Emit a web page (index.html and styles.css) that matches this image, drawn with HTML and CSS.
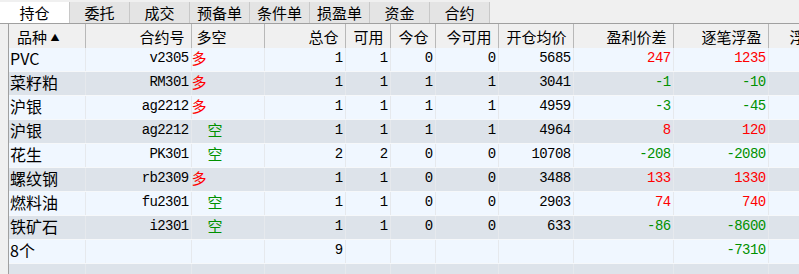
FILE: index.html
```html
<!DOCTYPE html>
<html lang="zh-CN">
<head>
    <meta charset="UTF-8">
    <title>持仓</title>
    <link rel="stylesheet" href="styles.css">
</head>
<body>
    <div class="tabs">
        <div class="tab active">持仓</div>
        <div class="tab">委托</div>
        <div class="tab">成交</div>
        <div class="tab">预备单</div>
        <div class="tab">条件单</div>
        <div class="tab">损盈单</div>
        <div class="tab">资金</div>
        <div class="tab">合约</div>
    </div>

    <div class="grid-wrap">
        <table class="grid">
            <colgroup>
                <col style="width:76px">
                <col style="width:106px">
                <col style="width:73px">
                <col style="width:81px">
                <col style="width:45px">
                <col style="width:45px">
                <col style="width:63px">
                <col style="width:75px">
                <col style="width:100px">
                <col style="width:95px">
                <col style="width:88px">
            </colgroup>
            <thead>
                <tr>
                    <th class="l first">品种 <span class="sort">▲</span></th>
                    <th>合约号</th>
                    <th class="l">多空</th>
                    <th>总仓</th>
                    <th>可用</th>
                    <th>今仓</th>
                    <th>今可用</th>
                    <th>开仓均价</th>
                    <th>盈利价差</th>
                    <th>逐笔浮盈</th>
                    <th>浮动盈亏</th>
                </tr>
            </thead>
            <tbody>
                <tr>
                    <td class="name">PVC</td><td>v2305</td><td class="dir long">多</td>
                    <td>1</td><td>1</td><td>0</td><td>0</td><td>5685</td>
                    <td class="up">247</td><td class="up">1235</td><td></td>
                </tr>
                <tr>
                    <td class="name">菜籽粕</td><td>RM301</td><td class="dir long">多</td>
                    <td>1</td><td>1</td><td>1</td><td>1</td><td>3041</td>
                    <td class="down">-1</td><td class="down">-10</td><td></td>
                </tr>
                <tr>
                    <td class="name">沪银</td><td>ag2212</td><td class="dir long">多</td>
                    <td>1</td><td>1</td><td>1</td><td>1</td><td>4959</td>
                    <td class="down">-3</td><td class="down">-45</td><td></td>
                </tr>
                <tr>
                    <td class="name">沪银</td><td>ag2212</td><td class="dir short">空</td>
                    <td>1</td><td>1</td><td>1</td><td>1</td><td>4964</td>
                    <td class="up">8</td><td class="up">120</td><td></td>
                </tr>
                <tr>
                    <td class="name">花生</td><td>PK301</td><td class="dir short">空</td>
                    <td>2</td><td>2</td><td>0</td><td>0</td><td>10708</td>
                    <td class="down">-208</td><td class="down">-2080</td><td></td>
                </tr>
                <tr>
                    <td class="name">螺纹钢</td><td>rb2309</td><td class="dir long">多</td>
                    <td>1</td><td>1</td><td>0</td><td>0</td><td>3488</td>
                    <td class="up">133</td><td class="up">1330</td><td></td>
                </tr>
                <tr>
                    <td class="name">燃料油</td><td>fu2301</td><td class="dir short">空</td>
                    <td>1</td><td>1</td><td>0</td><td>0</td><td>2903</td>
                    <td class="up">74</td><td class="up">740</td><td></td>
                </tr>
                <tr>
                    <td class="name">铁矿石</td><td>i2301</td><td class="dir short">空</td>
                    <td>1</td><td>1</td><td>0</td><td>0</td><td>633</td>
                    <td class="down">-86</td><td class="down">-8600</td><td></td>
                </tr>
                <tr>
                    <td class="name">8个</td><td></td><td></td>
                    <td>9</td><td></td><td></td><td></td><td></td>
                    <td></td><td class="down">-7310</td><td></td>
                </tr>
                <tr>
                    <td></td><td></td><td></td><td></td><td></td><td></td>
                    <td></td><td></td><td></td><td></td><td></td>
                </tr>
            </tbody>
        </table>
    </div>
</body>
</html>
```

FILE: styles.css
```css
body {
    margin: 0;
    background-color: #f0f0f0;
    font-family: 'Noto Sans CJK SC', sans-serif;
    width: 799px;
    height: 274px;
    overflow: hidden;
}
.tabs {
    display: flex;
    height: 24px;
    border-bottom: 1px solid #a0a0a0;
    box-sizing: border-box;
    padding-top: 2px;
}
.tab {
    width: 59px;
    border-right: 1px solid #c8c8c8;
    background-color: #e4e4e4;
    font-size: 15px;
    line-height: 21px;
    text-align: center;
    color: #000;
}
.tab.active {
    width: 69px;
    background-color: #ffffff;
}
.grid-wrap {
    margin-left: 8px;
    border-left: 1px solid #a0a0a0;
    overflow: hidden;
    height: 250px;
}
.grid {
    table-layout: fixed;
    border-collapse: collapse;
    width: 847px;
}
.grid th {
    height: 24px;
    padding: 0 6px 0 0;
    font-size: 15px;
    font-weight: normal;
    text-align: right;
    white-space: nowrap;
    background-color: #f0f0f0;
    border-right: 1px solid #b8b8b8;
    box-sizing: border-box;
}
.grid th.l {
    text-align: left;
    padding-left: 5px;
}
.grid th.first {
    padding-left: 8px;
}
.sort {
    font-size: 9px;
    vertical-align: 2px;
}
.grid td {
    height: 23px;
    padding: 0 2px 0 0;
    font-family: 'Liberation Mono', 'Noto Sans CJK SC', monospace;
    font-size: 14px;
    letter-spacing: -0.6px;
    line-height: 20px;
    vertical-align: top;
    text-align: right;
    white-space: nowrap;
    color: #000;
    border-right: 1px solid #e6e9ed;
    border-bottom: 1px solid #f6f8fa;
}
.grid tbody tr:nth-child(odd) td {
    background-color: #f0f7ff;
}
.grid tbody tr:nth-child(even) td {
    background-color: #dde3ea;
}
.grid td.name {
    text-align: left;
    padding-left: 1px;
    font-family: 'Noto Sans CJK SC', sans-serif;
    font-size: 16px;
    letter-spacing: 0;
}
.grid td.dir {
    text-align: left;
    font-family: 'Noto Sans CJK SC', sans-serif;
    font-size: 15px;
    letter-spacing: 0;
}
.grid td.long {
    color: #ff0000;
    padding-left: 0;
}
.grid td.short {
    color: #009100;
    padding-left: 16px;
}
.grid td.up {
    color: #ff0000;
}
.grid td.down {
    color: #009100;
}
```
